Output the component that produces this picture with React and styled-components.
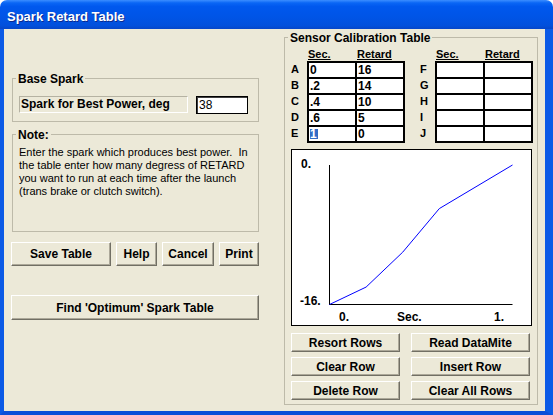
import React from 'react';
import styled, { createGlobalStyle } from 'styled-components';

const GlobalStyle = createGlobalStyle`
  html, body {
    margin: 0;
    padding: 0;
    background: #ffffff;
  }
  body {
    font-family: "Liberation Sans", Arial, sans-serif;
    color: #000;
  }
`;

const Window = styled.div`
  width: 553px;
  height: 415px;
  display: flex;
  flex-direction: column;
  overflow: hidden;
  border-radius: 7px 7px 0 0;
`;

const TitleBar = styled.div`
  flex: none;
  height: 29px;
  box-sizing: border-box;
  padding: 3px 0 0 7px;
  display: flex;
  align-items: center;
  background: linear-gradient(to bottom, #3b8dff 0%, #0a66f5 10%, #0058ee 22%, #0054e6 60%, #0250dc 88%, #0646c9 100%);
  color: #fff;
  font: bold 13px "Liberation Sans", Arial, sans-serif;
  text-shadow: 1px 1px 0 #0b2a8f;
`;

const Client = styled.div`
  flex: 1;
  display: flex;
  gap: 25px;
  padding: 0 7px;
  background: #ece9d8;
  border-left: 4px solid #0b5ae6;
  border-right: 8px solid #0b5ae6;
  border-bottom: 4px solid #0a4ed8;
`;

const LeftColumn = styled.div`
  width: 248px;
  flex: none;
  display: flex;
  flex-direction: column;
  padding-top: 41px;
`;

const GroupBox = styled.fieldset`
  margin: ${p => p.$top || 0}px 0 0 ${p => p.$left || 0}px;
  padding: 0;
  min-width: 0;
  border: 1px solid #bdbaa9;
  border-radius: 0;
`;

const Caption = styled.legend`
  margin-left: 3px;
  padding: 2px 2px 0;
  font: bold 12px/14px "Liberation Sans", Arial, sans-serif;
`;

const BaseRow = styled.div`
  display: flex;
  align-items: flex-start;
  gap: 8px;
  padding: 10px 0 7px 6px;
`;

const StaticLabel = styled.div`
  width: 169px;
  height: 17px;
  box-sizing: border-box;
  padding-left: 1px;
  border: 1px solid;
  border-color: #b5b2a2 #ffffff #ffffff #b5b2a2;
  font: bold 12px/15px "Liberation Sans", Arial, sans-serif;
  white-space: nowrap;
`;

const ValueBox = styled.div`
  width: 52px;
  height: 18px;
  box-sizing: border-box;
  padding-left: 2px;
  background: #fff;
  border: 1px solid #000;
  box-shadow: inset 1px 1px 0 #404040;
  font: 12px/16px "Liberation Sans", Arial, sans-serif;
`;

const NoteText = styled.div`
  height: 85px;
  padding: 4px 0 0 6px;
  box-sizing: content-box;
  font: 11px/13px "Liberation Sans", Arial, sans-serif;
  white-space: pre;
`;

const ButtonRow = styled.div`
  display: flex;
  justify-content: space-between;
  margin-top: 10px;
`;

const Button = styled.button`
  width: ${p => p.$w ? `${p.$w}px` : '100%'};
  height: ${p => p.$h || 19}px;
  margin: 0;
  padding: 0;
  box-sizing: border-box;
  background: #ece9d8;
  border: 1px solid;
  border-color: #ffffff #716f64 #716f64 #ffffff;
  box-shadow: inset -1px -1px 0 #aca899;
  font: bold 12px/14px "Liberation Sans", Arial, sans-serif;
  color: #000;
  white-space: nowrap;
`;

const WideButton = styled(Button)`
  margin-top: 29px;
`;

const CalGroup = styled(GroupBox)`
  width: 254px;
  box-sizing: border-box;
  flex: none;
  height: 376px;
`;

const CalInner = styled.div`
  padding: 4px 0 0 6px;
  display: flex;
  flex-direction: column;
`;

const Tables = styled.div`
  display: flex;
  gap: ${p => p.$gap}px;
`;

const TableBlock = styled.div`
  display: flex;
  flex-direction: column;
`;

const HeadRow = styled.div`
  display: flex;
  height: 12px;
  padding-left: ${p => p.$indent}px;
`;

const ColHead = styled.div`
  width: 48px;
  padding-left: 1px;
  font: bold 11px/11px "Liberation Sans", Arial, sans-serif;
  text-decoration: underline;
  text-underline-offset: 1px;
`;

const BodyRow = styled.div`
  display: flex;
`;

const Letters = styled.div`
  width: ${p => p.$w}px;
  display: flex;
  flex-direction: column;
`;

const Letter = styled.div`
  height: 16px;
  font: bold 11px/16px "Liberation Sans", Arial, sans-serif;
`;

const Grid = styled.div`
  display: grid;
  grid-template-columns: 48px 48px;
  grid-auto-rows: 16px;
  border: 1px solid #000;
  background: #fff;
`;

const Cell = styled.div`
  border: 1px solid #000;
  padding-left: 1px;
  font: bold 12px/14px "Liberation Sans", Arial, sans-serif;
`;

const Selected = styled.span`
  display: inline-block;
  height: 10px;
  margin-top: 2px;
  padding-right: 1px;
  line-height: 10px;
  vertical-align: top;
  background: #316ac5;
  color: #fff;
`;

const Chart = styled.div`
  width: 241px;
  height: 177px;
  box-sizing: border-box;
  margin-top: 6px;
  border: 1px solid #000;
  background: #fff;
  svg { display: block; }
  text {
    font: bold 12px "Liberation Sans", Arial, sans-serif;
    fill: #000;
  }
`;

const ActionGrid = styled.div`
  display: grid;
  grid-template-columns: 109px 119px;
  column-gap: 11px;
  row-gap: 5px;
  margin-top: 7px;
`;

const leftRows = [
  ['A', '0', '16'],
  ['B', '.2', '14'],
  ['C', '.4', '10'],
  ['D', '.6', '5'],
  ['E', '1', '0'],
];
const rightRows = ['F', 'G', 'H', 'I', 'J'];

const points = [[0, 16], [0.2, 14], [0.4, 10], [0.6, 5], [1, 0]];

const SparkChart = () => {
  const x0 = 37.5, x1 = 220.5, yTop = 15, yBot = 154.5;
  const path = points
    .map(([s, r]) => `${x0 + s * (x1 - x0)},${yBot - (16 - r) / 16 * (yBot - yTop)}`)
    .join(' ');
  return (
    <Chart>
      <svg width="239" height="175" viewBox="0 0 239 175">
        <text x="9" y="18">0.</text>
        <text x="8" y="155">-16.</text>
        <line x1={x0} y1={yTop} x2={x0} y2={yBot + 0.5} stroke="#000" strokeWidth="1" />
        <line x1={x0} y1={yBot} x2={x1} y2={yBot} stroke="#000" strokeWidth="1" />
        <polyline points={path} fill="none" stroke="#0000ff" strokeWidth="1" />
        <text x="47" y="171">0.</text>
        <text x="105" y="171">Sec.</text>
        <text x="202" y="171">1.</text>
      </svg>
    </Chart>
  );
};

const App = () => {
  return (
    <Window>
      <GlobalStyle />
      <TitleBar>Spark Retard Table</TitleBar>
      <Client>
        <LeftColumn>
          <GroupBox $left={1}>
            <Caption>Base Spark</Caption>
            <BaseRow>
              <StaticLabel>Spark for Best Power, deg</StaticLabel>
              <ValueBox>38</ValueBox>
            </BaseRow>
          </GroupBox>
          <GroupBox $left={1} $top={4}>
            <Caption>Note:</Caption>
            <NoteText>
              {'Enter the spark which produces best power.  In\nthe table enter how many degress of RETARD\nyou want to run at each time after the launch\n(trans brake or clutch switch).'}
            </NoteText>
          </GroupBox>
          <ButtonRow>
            <Button $w={100} $h={24}>Save Table</Button>
            <Button $w={41} $h={24}>Help</Button>
            <Button $w={52} $h={24}>Cancel</Button>
            <Button $w={40} $h={24}>Print</Button>
          </ButtonRow>
          <WideButton $h={25}>Find 'Optimum' Spark Table</WideButton>
        </LeftColumn>

        <CalGroup>
          <Caption>Sensor Calibration Table</Caption>
          <CalInner>
            <Tables $gap={15}>
              <TableBlock>
                <HeadRow $indent={16}>
                  <ColHead>Sec.</ColHead>
                  <ColHead>Retard</ColHead>
                </HeadRow>
                <BodyRow>
                  <Letters $w={16}>
                    {leftRows.map(r => <Letter key={r[0]}>{r[0]}</Letter>)}
                  </Letters>
                  <Grid>
                    {leftRows.map(([k, sec, ret]) => (
                      <React.Fragment key={k}>
                        <Cell>{k === 'E' ? <Selected>{sec}</Selected> : sec}</Cell>
                        <Cell>{ret}</Cell>
                      </React.Fragment>
                    ))}
                  </Grid>
                </BodyRow>
              </TableBlock>
              <TableBlock>
                <HeadRow $indent={15}>
                  <ColHead>Sec.</ColHead>
                  <ColHead>Retard</ColHead>
                </HeadRow>
                <BodyRow>
                  <Letters $w={15}>
                    {rightRows.map(k => <Letter key={k}>{k}</Letter>)}
                  </Letters>
                  <Grid>
                    {rightRows.map(k => (
                      <React.Fragment key={k}>
                        <Cell />
                        <Cell />
                      </React.Fragment>
                    ))}
                  </Grid>
                </BodyRow>
              </TableBlock>
            </Tables>
            <SparkChart />
            <ActionGrid>
              <Button>Resort Rows</Button>
              <Button>Read DataMite</Button>
              <Button>Clear Row</Button>
              <Button>Insert Row</Button>
              <Button>Delete Row</Button>
              <Button>Clear All Rows</Button>
            </ActionGrid>
          </CalInner>
        </CalGroup>
      </Client>
    </Window>
  );
};

export default App;
